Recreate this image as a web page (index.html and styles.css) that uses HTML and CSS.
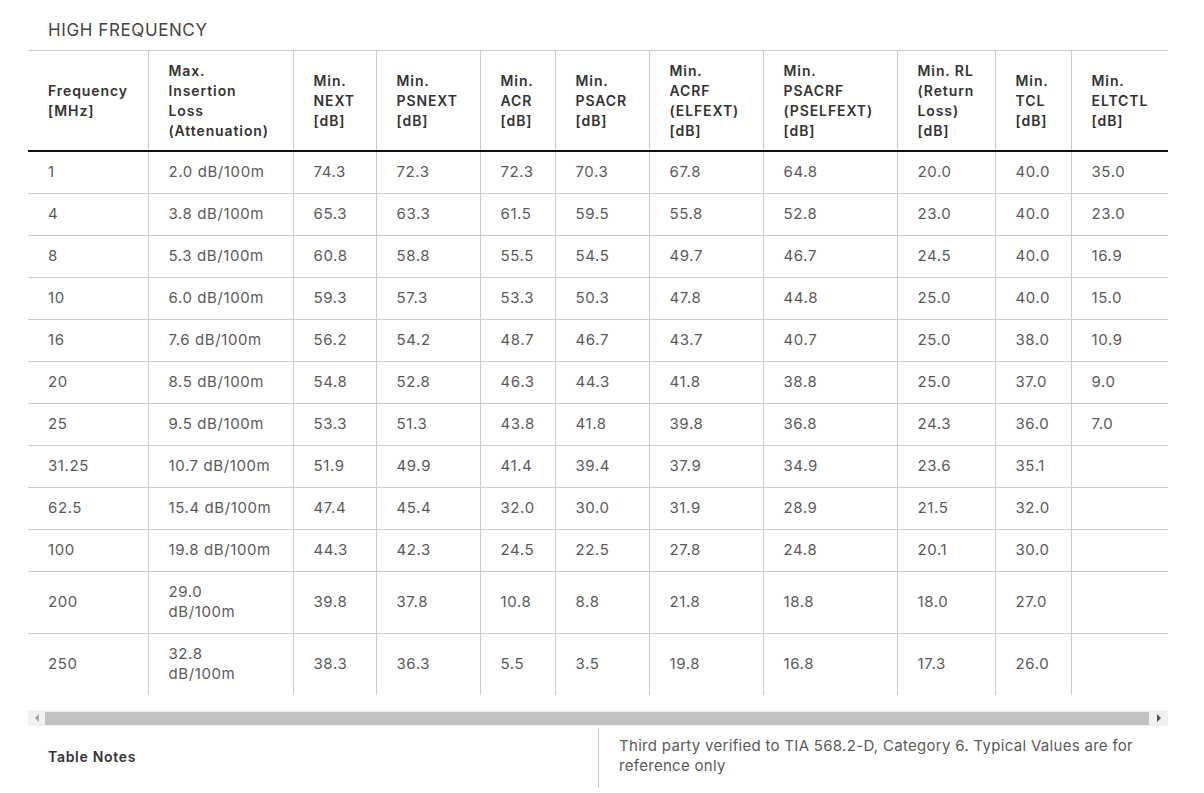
FILE: index.html
```html
<!DOCTYPE html>
<html lang="en">
<head>
<meta charset="utf-8">
<title>High Frequency</title>
<link rel="stylesheet" href="styles.css">
</head>
<body>
<div class="page">
  <h2 class="title">HIGH FREQUENCY</h2>
  <div class="scroller">
    <table class="spec">
      <colgroup>
        <col class="c1"><col class="c2"><col class="c3"><col class="c4"><col class="c5"><col class="c6"><col class="c7"><col class="c8"><col class="c9"><col class="c10"><col class="c11">
      </colgroup>
      <thead>
        <tr>
          <th>Frequency<br>[MHz]</th>
          <th>Max.<br>Insertion<br>Loss<br>(Attenuation)</th>
          <th>Min.<br>NEXT<br>[dB]</th>
          <th>Min.<br>PSNEXT<br>[dB]</th>
          <th>Min.<br>ACR<br>[dB]</th>
          <th>Min.<br>PSACR<br>[dB]</th>
          <th>Min.<br>ACRF<br>(ELFEXT)<br>[dB]</th>
          <th>Min.<br>PSACRF<br>(PSELFEXT)<br>[dB]</th>
          <th>Min. RL<br>(Return<br>Loss)<br>[dB]</th>
          <th>Min.<br>TCL<br>[dB]</th>
          <th>Min.<br>ELTCTL<br>[dB]</th>
        </tr>
      </thead>
      <tbody>
        <tr><td>1</td><td>2.0 dB/100m</td><td>74.3</td><td>72.3</td><td>72.3</td><td>70.3</td><td>67.8</td><td>64.8</td><td>20.0</td><td>40.0</td><td>35.0</td></tr>
        <tr><td>4</td><td>3.8 dB/100m</td><td>65.3</td><td>63.3</td><td>61.5</td><td>59.5</td><td>55.8</td><td>52.8</td><td>23.0</td><td>40.0</td><td>23.0</td></tr>
        <tr><td>8</td><td>5.3 dB/100m</td><td>60.8</td><td>58.8</td><td>55.5</td><td>54.5</td><td>49.7</td><td>46.7</td><td>24.5</td><td>40.0</td><td>16.9</td></tr>
        <tr><td>10</td><td>6.0 dB/100m</td><td>59.3</td><td>57.3</td><td>53.3</td><td>50.3</td><td>47.8</td><td>44.8</td><td>25.0</td><td>40.0</td><td>15.0</td></tr>
        <tr><td>16</td><td>7.6 dB/100m</td><td>56.2</td><td>54.2</td><td>48.7</td><td>46.7</td><td>43.7</td><td>40.7</td><td>25.0</td><td>38.0</td><td>10.9</td></tr>
        <tr><td>20</td><td>8.5 dB/100m</td><td>54.8</td><td>52.8</td><td>46.3</td><td>44.3</td><td>41.8</td><td>38.8</td><td>25.0</td><td>37.0</td><td>9.0</td></tr>
        <tr><td>25</td><td>9.5 dB/100m</td><td>53.3</td><td>51.3</td><td>43.8</td><td>41.8</td><td>39.8</td><td>36.8</td><td>24.3</td><td>36.0</td><td>7.0</td></tr>
        <tr><td>31.25</td><td>10.7 dB/100m</td><td>51.9</td><td>49.9</td><td>41.4</td><td>39.4</td><td>37.9</td><td>34.9</td><td>23.6</td><td>35.1</td><td></td></tr>
        <tr><td>62.5</td><td>15.4 dB/100m</td><td>47.4</td><td>45.4</td><td>32.0</td><td>30.0</td><td>31.9</td><td>28.9</td><td>21.5</td><td>32.0</td><td></td></tr>
        <tr><td>100</td><td>19.8 dB/100m</td><td>44.3</td><td>42.3</td><td>24.5</td><td>22.5</td><td>27.8</td><td>24.8</td><td>20.1</td><td>30.0</td><td></td></tr>
        <tr><td>200</td><td>29.0<br>dB/100m</td><td>39.8</td><td>37.8</td><td>10.8</td><td>8.8</td><td>21.8</td><td>18.8</td><td>18.0</td><td>27.0</td><td></td></tr>
        <tr><td>250</td><td>32.8<br>dB/100m</td><td>38.3</td><td>36.3</td><td>5.5</td><td>3.5</td><td>19.8</td><td>16.8</td><td>17.3</td><td>26.0</td><td></td></tr>
      </tbody>
    </table>
  </div>
  <div class="hscroll" aria-hidden="true">
    <div class="hs-btn hs-left"><span class="tri tri-left"></span></div>
    <div class="hs-thumb"></div>
    <div class="hs-btn hs-right"><span class="tri tri-right"></span></div>
  </div>
  <div class="notes">
    <div class="notes-label">Table Notes</div>
    <div class="notes-text">Third party verified to TIA 568.2-D, Category 6. Typical Values are for reference only</div>
  </div>
</div>
</body>
</html>
```

FILE: styles.css
```css
html, body {
  margin: 0;
  padding: 0;
  background: #fff;
}

body {
  font-family: Inter, "Open Sans", "Liberation Sans", sans-serif;
  color: #5a5a5a;
}

.page {
  width: 1140px;
  margin-left: 28px;
}

.title {
  margin: 0;
  padding: 20px 0 10px 20px;
  font-size: 17px;
  line-height: 20px;
  font-weight: 400;
  letter-spacing: 0.6px;
  color: #444;
}

.scroller {
  overflow: hidden;
  padding-bottom: 15px;
}

.spec {
  table-layout: fixed;
  width: 1144px;
  border-collapse: collapse;
  font-size: 15px;
  line-height: 20px;
}

.c1 { width: 120px; }
.c2 { width: 145px; }
.c3 { width: 83px; }
.c4 { width: 104px; }
.c5 { width: 75px; }
.c6 { width: 94px; }
.c7 { width: 114px; }
.c8 { width: 134px; }
.c9 { width: 98px; }
.c10 { width: 76px; }
.c11 { width: 101px; }

.spec th {
  text-align: left;
  vertical-align: middle;
  white-space: nowrap;
  font-size: 14px;
  font-weight: 600;
  color: #333;
  letter-spacing: 0.9px;
  padding: 10px 20px 9px 20px;
  border-top: 1px solid #ccc;
  border-left: 1px solid #ccc;
  border-bottom: 2px solid #111;
}

.spec td {
  text-align: left;
  vertical-align: middle;
  white-space: nowrap;
  padding: 10px 20px 11px 20px;
  border-left: 1px solid #ccc;
  border-top: 1px solid #ccc;
  letter-spacing: 0.6px;
  color: #5a5a5a;
}

.spec th:first-child,
.spec td:first-child {
  border-left: none;
}

.spec thead + tbody tr:first-child td {
  border-top: 2px solid #111;
}

.hscroll {
  display: flex;
  height: 16px;
  background: #f1f1f1;
}

.hs-btn {
  display: flex;
  align-items: center;
  justify-content: center;
}

.hs-left { width: 17px; }
.hs-right { width: 19px; }

.hs-thumb {
  flex: 1;
  margin: 2px 0 1px 0;
  background: #c1c1c1;
}

.tri {
  width: 0;
  height: 0;
  border-top: 4px solid transparent;
  border-bottom: 4px solid transparent;
}

.tri-left {
  border-right: 4px solid #a3a3a3;
}

.tri-right {
  border-left: 4px solid #505050;
}

.notes {
  display: grid;
  grid-template-columns: 570px 570px;
  margin-top: 2px;
}

.notes-label {
  display: flex;
  align-items: center;
  padding: 7px 20px 11px 20px;
  font-size: 14px;
  font-weight: 600;
  color: #333;
  letter-spacing: 0.7px;
}

.notes-text {
  border-left: 1px solid #ccc;
  padding: 8px 20px 12px 20px;
  font-size: 15px;
  line-height: 20px;
  letter-spacing: 0.3px;
  color: #5a5a5a;
}
```
